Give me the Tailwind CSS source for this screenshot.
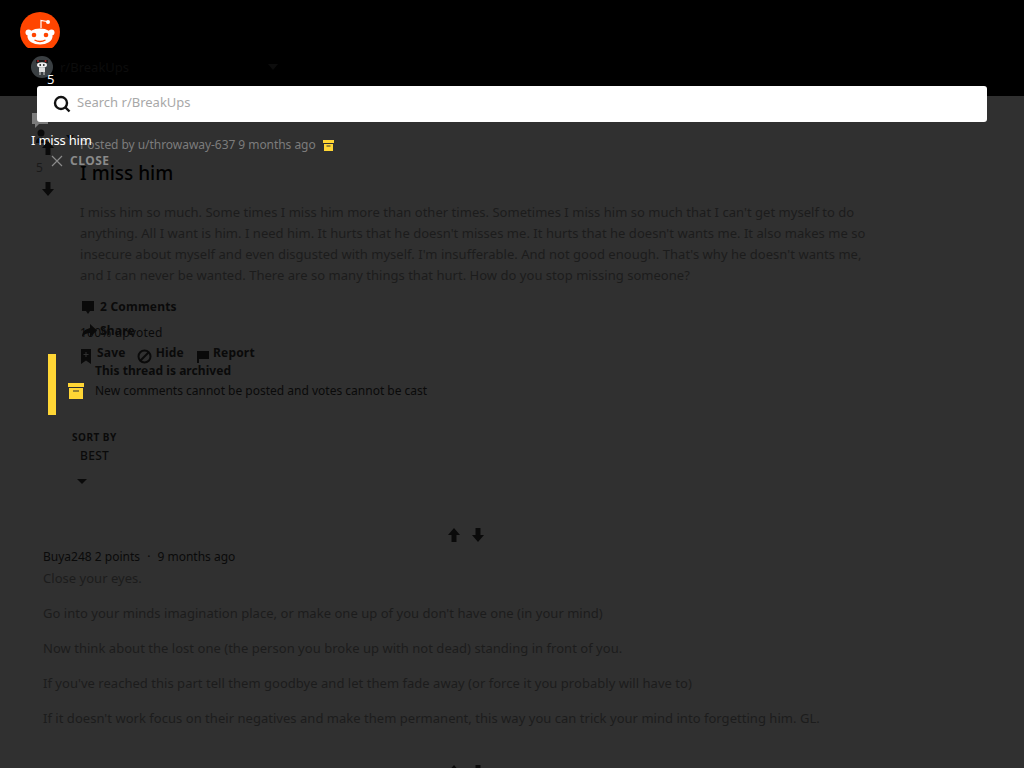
<!DOCTYPE html>
<html lang="en">
<head>
  <meta charset="UTF-8">
  <meta name="viewport" content="width=device-width, initial-scale=1.0">
  <title>I miss him : BreakUps</title>
  <script src="https://cdn.jsdelivr.net/npm/@tailwindcss/browser@4"></script>
</head>
<body class="h-[768px] overflow-hidden bg-[#303030] font-['Noto_Sans',sans-serif] text-[#0a0a0a]">
  <div class="relative h-[768px] overflow-hidden">
    <!-- Top bar -->
    <header class="relative h-24 bg-black">
      <div class="absolute left-5 top-3 h-9 w-10 overflow-hidden">
        <svg class="h-10 w-10" viewBox="0 0 40 40">
          <circle cx="20" cy="20" r="20" fill="#ff4500"/>
          <path d="M21 16 L21 8.500 L27 9.500" fill="none" stroke="#fff" stroke-width="1.200"/>
          <circle cx="28" cy="10" r="2" fill="#fff"/>
          <circle cx="8.500" cy="20.500" r="3" fill="#fff"/>
          <circle cx="31.500" cy="20.500" r="3" fill="#fff"/>
          <ellipse cx="20" cy="24.500" rx="12.500" ry="8" fill="#fff"/>
          <circle cx="14" cy="23" r="2.300" fill="#ff4500"/>
          <circle cx="26" cy="23" r="2.300" fill="#ff4500"/>
          <path d="M14.500 28 Q20 31 25.500 28" fill="none" stroke="#ff4500" stroke-width="1.300"/>
        </svg>
      </div>
      <div class="absolute left-[31px] top-[56px] flex h-[22px] w-[22px] items-center justify-center rounded-full bg-[#3a3f42]">
        <svg class="h-[18px] w-[18px]" viewBox="0 0 18 18">
          <rect x="3" y="2" width="12" height="3" fill="#1a1a1a"/>
          <circle cx="5" cy="3" r="1" fill="#b02020"/>
          <circle cx="12.500" cy="3" r="1" fill="#b02020"/>
          <ellipse cx="9" cy="7" rx="5" ry="2.800" fill="#eee"/>
          <rect x="6" y="9.500" width="6" height="4.500" fill="#ddd"/>
          <path d="M7 14v3M11 14v3" stroke="#ccc"/>
          <circle cx="7.200" cy="7" r=".9" fill="#222"/>
          <circle cx="10.800" cy="7" r=".9" fill="#222"/>
        </svg>
      </div>
      <span class="absolute left-[47px] top-[70px] text-[13px] leading-[18px] text-white">5</span>
      <span class="absolute left-[60px] top-[57px] text-[13px] leading-5 text-[#0c0c0c]">r/BreakUps</span>
      <svg class="absolute left-[268px] top-[64px] h-[6px] w-[10px]" viewBox="0 0 10 6"><path d="M0 0h10L5 6z" fill="#0c0c0c"/></svg>
    </header>

    <!-- Sidebar bits poking out from under the search box -->
    <svg class="absolute left-[32px] top-[113px] h-[16px] w-[16px]" viewBox="0 0 16 16"><path d="M0 0h16v11H7l-4 4v-4H0z" fill="#7c7c7c"/></svg>
    <svg class="absolute left-[35px] top-[129px] h-[15px] w-[13px]" viewBox="0 0 13 15"><circle cx="6" cy="4" r="3.500" fill="#0a0a0a"/><path d="M1 13c0-3 2-4.500 5-4.500S12 10 12 13v1H1z" fill="#0a0a0a"/></svg>
    <svg class="absolute left-[66px] top-[135px] h-[5px] w-[8px]" viewBox="0 0 8 5"><path d="M0 0h8L4 5z" fill="#0a0a0a"/></svg>

    <!-- Search -->
    <div class="absolute left-[37px] top-[86px] flex h-9 w-[950px] items-center gap-[6px] rounded-[3px] bg-white pb-[5px] pl-4 text-[13px] text-[#a8a8a8]">
      <svg class="mt-[5px] h-[18px] w-[18px]" viewBox="0 0 18 18" fill="none" stroke="#111" stroke-width="2.400"><circle cx="8" cy="8" r="6"/><path d="M12.500 12.500l4 4"/></svg>
      <span class="leading-5">Search r/BreakUps</span>
    </div>

    <!-- Close bar overlapping the post -->
    <span class="absolute left-[31px] top-[131px] text-[13px] leading-[19px] tracking-[-0.2px] text-white">I miss him</span>
    <div class="absolute left-[51px] top-[153px] flex items-center gap-[7px] text-[#8a8a8a]">
      <svg class="h-[12px] w-[12px]" viewBox="0 0 12 12" fill="none" stroke="currentColor" stroke-width="1.200"><path d="M1 1l10 10M11 1L1 11"/></svg>
      <span class="text-xs leading-4 font-bold tracking-[0.5px]">CLOSE</span>
    </div>

    <!-- Vote column -->
    <svg class="absolute left-[41px] top-[141px] h-[14px] w-[14px]" viewBox="0 0 14 14"><path d="M7 0l6 7H9.500v7h-5V7H1z" fill="#0a0a0a"/></svg>
    <span class="absolute left-[36px] top-[160px] text-xs leading-4 text-[#1a1a1a]">5</span>
    <svg class="absolute left-[41px] top-[182px] h-[14px] w-[14px]" viewBox="0 0 14 14"><path d="M7 14L1 7h3.500V0h5v7H13z" fill="#0a0a0a"/></svg>

    <!-- Post -->
    <main class="pl-20 pt-[39px]">
      <div class="flex items-center gap-[7px] text-xs leading-5 tracking-[-0.05px] text-[#7c7c7c]">
        <span>Posted by u/throwaway-637 9 months ago</span>
        <svg class="h-[11px] w-[11px]" viewBox="0 0 11 11"><path d="M0 0h11v3H0zM1 4h9v7H1z" fill="#ffd635"/><path d="M3.500 6h4" stroke="#303030"/></svg>
      </div>
      <h1 class="mt-[6px] text-[19px] leading-6 font-medium text-black">I miss him</h1>
      <div class="mt-[17px] w-[800px] text-[13px] leading-[21px] tracking-[0.03px] text-[#1c1c1c]">
        <p>I miss him so much. Some times I miss him more than other times. Sometimes I miss him so much that I can't get myself to do anything. All I want is him. I need him. It hurts that he doesn't misses me. It hurts that he doesn't wants me. It also makes me so insecure about myself and even disgusted with myself. I'm insufferable. And not good enough. That's why he doesn't wants me, and I can never be wanted. There are so many things that hurt. How do you stop missing someone?</p>
      </div>
      <div class="relative mt-[9px] h-[60px] text-xs font-bold tracking-[0.2px]">
        <div class="flex h-6 items-center gap-[6px] pl-[2px]">
          <svg class="h-[13px] w-[12px]" viewBox="0 0 12 13"><path d="M0 0h12v10H8l-2 3-2-3H0z" fill="#0a0a0a"/></svg>
          <span>2 Comments</span>
        </div>
        <div class="flex h-6 items-center gap-[3px] pl-[2px]">
          <svg class="h-[14px] w-[15px]" viewBox="0 0 15 14"><path d="M8 0l7 6.500L8 13V9C5 9 2 10 0 13c0-5 3-8 8-8.500z" fill="#0a0a0a"/></svg>
          <span>Share</span>
        </div>
        <span class="absolute left-0 top-[28px] text-xs leading-5 font-normal text-[#0a0a0a]">100% upvoted</span>
        <div class="flex h-[20px] items-center">
          <svg class="mt-[6px] ml-px h-[15px] w-[10px]" viewBox="0 0 10 15"><path d="M0 0h10v15l-5-3.500L0 15z" fill="#0a0a0a"/><path d="M5 3v5M2.500 5.500h5" stroke="#303030"/></svg>
          <span class="ml-[6px]">Save</span>
          <svg class="mt-[6px] ml-[11px] h-[15px] w-[15px]" viewBox="0 0 15 15" fill="none" stroke="#0a0a0a" stroke-width="2"><circle cx="7.500" cy="7.500" r="6"/><path d="M3.500 11.500l8-8"/></svg>
          <span class="ml-1">Hide</span>
          <svg class="mt-[6px] ml-3 h-[13px] w-[13px]" viewBox="0 0 13 13"><path d="M1 1h12v8H3v4H1z" fill="#0a0a0a"/></svg>
          <span class="ml-1">Report</span>
        </div>
      </div>
    </main>

    <!-- Archived notice -->
    <section class="-mt-px ml-12 flex h-[61px] items-start border-l-8 border-[#ffd635] pl-3 pt-[7px]">
      <svg class="mt-[22px] h-4 w-4" viewBox="0 0 16 16"><path d="M0 0h16v4H0zM1 5h14v11H1z" fill="#ffd635"/><path d="M5 8h6" stroke="#303030"/></svg>
      <div class="ml-[11px] text-xs leading-5">
        <p class="font-bold tracking-[0.05px]">This thread is archived</p>
        <p>New comments cannot be posted and votes cannot be cast</p>
      </div>
    </section>

    <!-- Sort -->
    <div class="mt-[14px] ml-[72px] text-[10px] leading-4 font-bold tracking-[0.5px]">SORT BY</div>
    <div class="mt-px ml-20 text-xs leading-[20px] font-medium tracking-[0.3px]">BEST</div>
    <svg class="mt-[13px] ml-[77px] h-[5px] w-[10px]" viewBox="0 0 10 5"><path d="M0 0h10L5 5z" fill="#0a0a0a"/></svg>

    <!-- Comment -->
    <article class="mt-[44px] pl-[43px]">
      <div class="flex gap-[10px] pl-[404px]">
        <svg class="h-[14px] w-[14px]" viewBox="0 0 14 14"><path d="M7 0l6 7H9.500v7h-5V7H1z" fill="#0a0a0a"/></svg>
        <svg class="h-[14px] w-[14px]" viewBox="0 0 14 14"><path d="M7 14L1 7h3.500V0h5v7H13z" fill="#0a0a0a"/></svg>
      </div>
      <div class="mt-[5px] text-xs leading-5">Buya248 2 points <span class="mx-1">·</span> 9 months ago</div>
      <div class="mt-px w-[900px] space-y-[14px] text-[13px] leading-[21px] tracking-[0.03px] text-[#1c1c1c]">
        <p>Close your eyes.</p>
        <p>Go into your minds imagination place, or make one up of you don't have one (in your mind)</p>
        <p>Now think about the lost one (the person you broke up with not dead) standing in front of you.</p>
        <p>If you've reached this part tell them goodbye and let them fade away (or force it you probably will have to)</p>
        <p>If it doesn't work focus on their negatives and make them permanent, this way you can trick your mind into forgetting him. GL.</p>
      </div>
      <div class="mt-9 flex gap-[10px] pl-[404px]">
        <svg class="h-[14px] w-[14px]" viewBox="0 0 14 14"><path d="M7 0l6 7H9.500v7h-5V7H1z" fill="#0a0a0a"/></svg>
        <svg class="h-[14px] w-[14px]" viewBox="0 0 14 14"><path d="M7 14L1 7h3.500V0h5v7H13z" fill="#0a0a0a"/></svg>
      </div>
    </article>
  </div>
</body>
</html>
